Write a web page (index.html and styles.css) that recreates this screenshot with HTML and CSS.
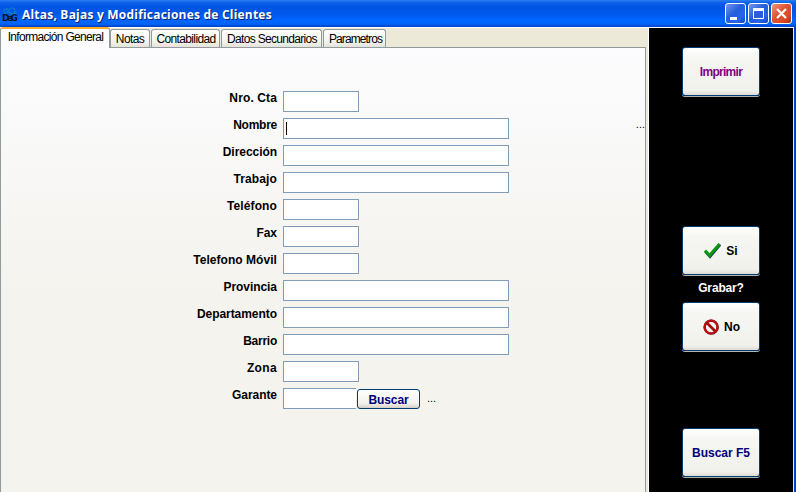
FILE: index.html
```html
<!DOCTYPE html>
<html lang="es">
<head>
<meta charset="utf-8">
<title>Altas, Bajas y Modificaciones de Clientes</title>
<link rel="stylesheet" href="styles.css">
</head>
<body>
<div class="window">
  <header class="titlebar">
    <svg class="logo" width="18" height="18" viewBox="0 0 18 18">
      <g fill="none" stroke="#0788bd" stroke-width="1.5"><circle cx="5" cy="5" r="2.2" stroke-dasharray="2 1"/><circle cx="11" cy="5" r="3" stroke-dasharray="2 1"/><path d="M10 8h6"/></g>
      <text x="1" y="15" textLength="16">DeG</text>
    </svg>
    <h1 class="title">Altas, Bajas y Modificaciones de Clientes</h1>
    <div class="controls">
      <button class="control" aria-label="Minimizar"><svg width="19" height="19"><path d="M4 14.5h7" stroke="#fff" stroke-width="3"/></svg></button>
      <button class="control" aria-label="Maximizar"><svg width="19" height="19"><path d="M4.5 5v9.5h10V5" fill="none" stroke="#fff"/><path d="M4 5.5h11" stroke="#fff" stroke-width="3"/></svg></button>
      <button class="control close" aria-label="Cerrar"><svg width="19" height="19"><path d="M5 5l9 9M14 5l-9 9" stroke="#fff" stroke-width="2.2"/></svg></button>
    </div>
  </header>
  <div class="body">
    <main class="main">
      <nav class="tabs">
        <div class="tab active"><span class="t-info">Información General</span></div>
        <div class="tab notes"><span class="t-notes">Notas</span></div>
        <div class="tab accounting"><span class="t-acc">Contabilidad</span></div>
        <div class="tab secondary"><span class="t-sec">Datos Secundarios</span></div>
        <div class="tab params"><span class="t-par">Parametros</span></div>
      </nav>
      <section class="page">
        <div class="form">
          <div class="row"><label class="tracked">Nro. Cta</label><div class="field"></div></div>
          <div class="row"><label class="name">Nombre</label><div class="field wide"><i class="caret"></i></div><span class="dots far">...</span></div>
          <div class="row"><label>Dirección</label><div class="field wide"></div></div>
          <div class="row"><label class="tracked">Trabajo</label><div class="field wide"></div></div>
          <div class="row"><label class="tracked">Teléfono</label><div class="field"></div></div>
          <div class="row"><label>Fax</label><div class="field"></div></div>
          <div class="row"><label class="mobile">Telefono Móvil</label><div class="field"></div></div>
          <div class="row"><label>Provincia</label><div class="field wide"></div></div>
          <div class="row"><label>Departamento</label><div class="field wide"></div></div>
          <div class="row"><label class="name">Barrio</label><div class="field wide"></div></div>
          <div class="row"><label class="zone">Zona</label><div class="field"></div></div>
          <div class="row"><label>Garante</label><div class="field short"></div><button class="find">Buscar</button><span class="dots">...</span></div>
        </div>
      </section>
    </main>
    <aside class="side">
      <button class="big print">Imprimir</button>
      <button class="big yes"><svg width="18" height="18"><path d="M1.5 9.5l4.5 5L16 2.5" fill="none" stroke="#173b55" stroke-width="3"/><path d="M1 8.5l4.5 5L15.5 2" fill="none" stroke="#0a9b10" stroke-width="3"/></svg>Si</button>
      <p class="question">Grabar?</p>
      <button class="big no"><svg width="18" height="18"><g fill="none"><circle cx="9.2" cy="9.2" r="6.5" stroke="#5e1010" stroke-width="2.3"/><circle cx="9" cy="9" r="6.5" stroke="#c00c12" stroke-width="2.2"/><path d="M4.5 4.5l9 9" stroke="#a30c10" stroke-width="2.6"/></g></svg>No</button>
      <button class="big search">Buscar F5</button>
    </aside>
  </div>
</div>
</body>
</html>
```
FILE: styles.css
```css
* { box-sizing: border-box; }
body { margin: 0; font: 12px "Liberation Sans", sans-serif; color: #000; }
button { font: inherit; padding: 0; margin: 0; }
svg { display: block; flex: none; }
.window { width: 796px; height: 492px; overflow: hidden; display: flex; flex-direction: column; background: #ece9d8; }
.titlebar {
  height: 27px; flex: none; display: flex; align-items: center; padding: 0 4px 0 1px;
  background: linear-gradient(#2c7eee 0, #0a5fe8 3px, #0054e3 7px, #0058ec 14px, #0066ff 20px, #0064fa 24px, #0040c0 27px);
}
.logo { margin-top: 3px; }
.logo text { font: bold 9px "DejaVu Sans", sans-serif; fill: #021326; }
.title { margin: 2px 0 0 3px; font: bold 12px "Open Sans", sans-serif; letter-spacing: 0.21px; color: #fff; text-shadow: 1px 1px #0a246a; white-space: nowrap; }
.controls { margin-left: auto; display: flex; gap: 2px; }
.control { width: 21px; height: 21px; border: 1px solid #fff; border-radius: 3px; background: linear-gradient(135deg, #7597ed, #245edb 45%, #2964e8 75%, #1744b5); }
.close { background: linear-gradient(135deg, #ee9580, #e0512f 45%, #da4a25 75%, #a82d10); }
.body { flex: 1; display: flex; border-top: 1px solid #fff; min-height: 0; }
.main { width: 649px; display: flex; flex-direction: column; border-right: 1px solid #fff; }
.tabs { height: 19px; display: flex; align-items: flex-end; flex: none; }
.tab { height: 18px; display: flex; justify-content: center; align-items: center; border: 1px solid #919b9c; border-bottom: 0; border-radius: 3px 3px 0 0; background: linear-gradient(#fff, #f3f2ec 70%, #e5e3da); white-space: nowrap; margin-right: 1px; }
.tab.active { width: 110px; height: 21px; margin: 0 0 -1px; z-index: 1; background: #fcfcfe; border-top: 2px solid #ffad2b; align-items: flex-start; padding-top: 1px; }
.notes { width: 40px; }
.accounting { width: 69px; }
.secondary { width: 101px; }
.params { width: 63px; }
.t-info { letter-spacing: -0.69px; margin-left: 1px; }
.t-notes { letter-spacing: -0.6px; }
.t-acc { letter-spacing: -0.64px; margin-left: 1px; }
.t-sec { letter-spacing: -0.68px; margin-left: 1px; }
.t-par { letter-spacing: -0.88px; margin-left: 2px; }
.page { width: 646px; flex: 1; border: 1px solid #919b9c; border-bottom: 0; background: linear-gradient(#fcfcfe, #f4f3ee 55%, #f4f3ee); padding-top: 43px; }
.form { display: flex; flex-direction: column; gap: 6px; }
.row { height: 21px; display: flex; align-items: flex-start; }
label { width: 276px; margin-right: 6px; text-align: right; font-weight: bold; line-height: 14px; letter-spacing: -0.05px; }
.tracked { letter-spacing: 0.12px; }
.mobile { letter-spacing: 0.05px; }
.name { letter-spacing: -0.25px; }
.zone { letter-spacing: 0.35px; }
.field { width: 76px; height: 21px; border: 1px solid #7f9db9; background: #fff; flex: none; }
.wide { width: 226px; }
.short { width: 73px; border-right: 0; }
.caret { display: block; width: 1px; height: 13px; margin: 3px 0 0 2px; background: #000; }
.dots { margin: 3px 0 0 7px; line-height: 14px; font-size: 11px; letter-spacing: 0; }
.dots.far { margin: -1px 0 0 auto; }
.find { width: 63px; height: 20px; margin: 1px 0 0 1px; border: 1px solid #003c74; border-radius: 3px; background: linear-gradient(#fff, #f2f1eb 75%, #d6d0c5); color: #000080; font-weight: bold; line-height: 20px; letter-spacing: -0.1px; }
.side { width: 145px; border-right: 1px solid #ece9d8; background: #000; display: flex; flex-direction: column; align-items: center; padding-top: 19px; }
.body::after { content: ""; flex: 1; background: #0041d0; margin-top: -1px; }
.big { width: 78px; height: 49px; flex: none; display: flex; align-items: center; justify-content: center; gap: 4px; border: 1px solid #003c74; border-radius: 3px; box-shadow: 0 1px #b4b4af; background: linear-gradient(#fff, #f6f6f3 20%, #f1f1ec 90%, #dedbd2); font-weight: bold; }
.print { color: #800080; letter-spacing: -0.7px; }
.yes { margin-top: 130px; }
.question { margin: 6px 0; line-height: 15px; color: #fff; font-weight: bold; letter-spacing: -0.15px; }
.search { margin-top: 77px; color: #000080; letter-spacing: 0; }
```
